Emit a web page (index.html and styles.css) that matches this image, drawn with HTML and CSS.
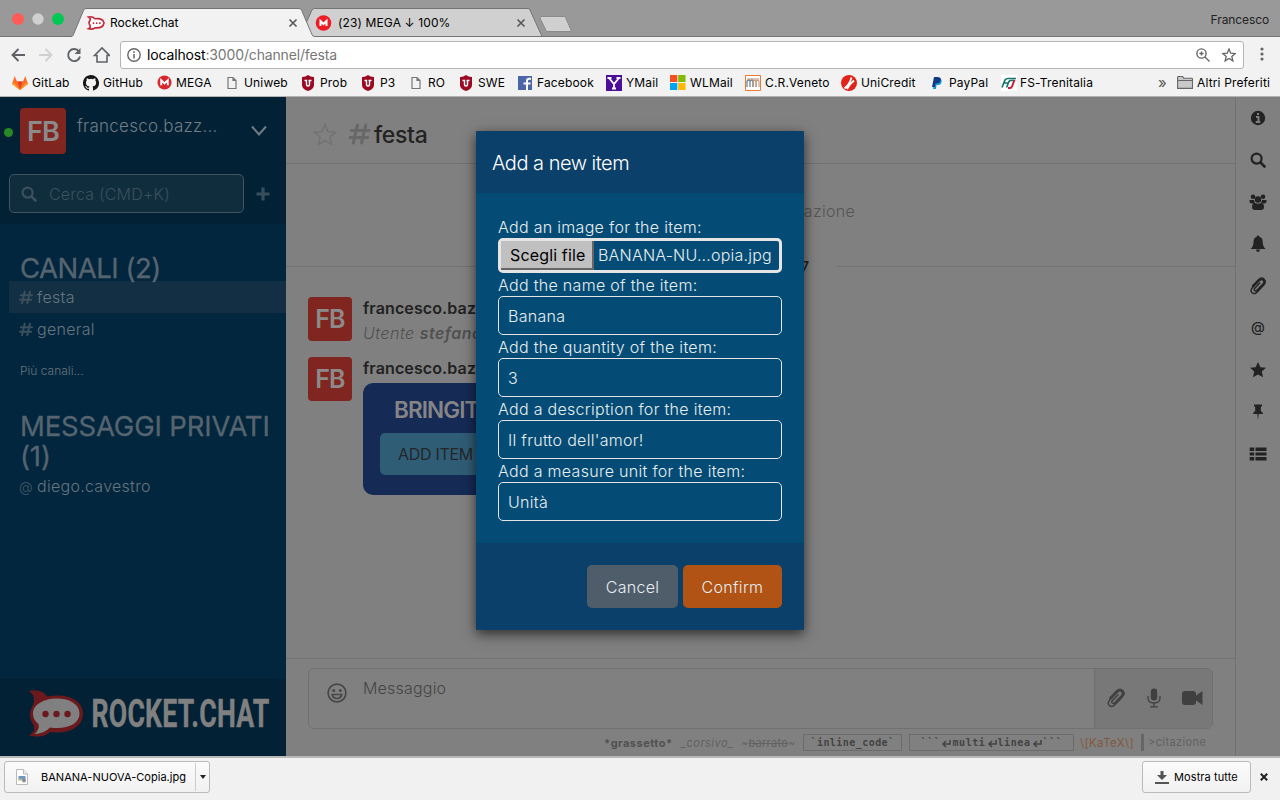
FILE: index.html
```html
<!DOCTYPE html>
<html lang="it">
<head>
<meta charset="utf-8">
<title>Rocket.Chat</title>
<link rel="stylesheet" href="styles.css">
</head>
<body>
<svg class="defs" width="0" height="0">
  <defs>
    <symbol id="clip" viewBox="0 0 18 18"><path d="M14.600 8.200 8.200 14.900c-1.700 1.800-3.600 2.200-5.100.9-1.500-1.400-1.300-3.300.3-5L10.200 3.700c1.300-1.300 2.800-1.500 3.900-.5s1 2.500-.2 3.800l-6 6.200c-.8.8-1.700.9-2.300.3s-.6-1.500.2-2.300l5-5.100M14.600 8.200c1.900-2 2.100-4.300.5-5.900s-3.900-1.300-5.700.5L3.400 9" fill="none" stroke="currentColor" stroke-width="1.400" stroke-linecap="round"/></symbol>
    <symbol id="page" viewBox="0 0 10 14"><path d="M1 1.500h5l3 3v8H1zM6 1.500v3h3" fill="none" stroke="#777" stroke-width="1.200"/></symbol>
    <symbol id="shield" viewBox="0 0 14 16"><path d="M1 2q3 .3 6-2 3 2.300 6 2v8q0 4-6 6-6-2-6-6z" fill="#9b0a22"/><path d="M3.500 5.500h2v4q0 1.500 1.500 1.500t1.500-1.500v-4h2M7.500 5.500h3" fill="none" stroke="#fff" stroke-width="1.400"/></symbol>
    <symbol id="mega" viewBox="0 0 16 16"><circle cx="8" cy="8" r="7.500" fill="#d9272e"/><path d="M4.500 11V5.500L8 9l3.500-3.500V11" fill="none" stroke="#fff" stroke-width="2"/></symbol>
    <symbol id="hash" viewBox="0 0 16 16"><path d="M6.500 1.500 3.500 14.500M12.500 1.500 9.500 14.500M2 5.500h13M1 10.500h13" fill="none" stroke="currentColor" stroke-width="2.200" stroke-linecap="round"/></symbol>
    <symbol id="lens" viewBox="0 0 16 16"><circle cx="6.600" cy="6.600" r="5" fill="none" stroke="currentColor" stroke-width="2.200"/><path d="m10.500 10.500 4 4" stroke="currentColor" stroke-width="2.600" stroke-linecap="round"/></symbol>
  </defs>
</svg>

<header class="titlebar">
  <svg class="tabs" width="580" height="37" viewBox="0 0 580 37">
    <circle cx="18" cy="19" r="6" fill="#ff5c57"/><circle cx="38" cy="19" r="5.700" fill="#d0d0d0"/><circle cx="58" cy="19" r="6" fill="#00c853"/>
    <path d="M300 36.500 312 10q.8-1.500 2.500-1.500H528q1.500 0 2 1.500l12 26.500z" fill="#d0d0d0" stroke="#747474"/>
    <path d="M0 36.500H71q1.500 0 2-1l10.500-25q.8-2 2.500-2H299q2 0 2.700 2L312 34.500q.8 2 2.500 2H580V37H0z" fill="#f2f2f2"/>
    <path d="M0 36.500H71q1.500 0 2-1l10.500-25q.8-2 2.500-2H299q2 0 2.700 2L312 34.500q.8 2 2.500 2H580" fill="none" stroke="#747474"/>
    <path d="M1 36.500H72M314 36.500" stroke="#747474"/>
    <path d="M541 16.500h23q1 0 1.500 1l5.500 12.500q.5 1.500-1 1.500h-22q-1.500 0-2-1l-6-12.500q-.5-1.500 1-1.500z" fill="#d0d0d0" stroke="#8a8a8a"/>
    <path d="m289.500 19.500 7 7m0-7-7 7M517.500 19.500l7 7m0-7-7 7" stroke="#5a5a5a" stroke-width="1.700"/>
    <path d="M88.500 17q4-1 6.500 1.800 8-1 9 4.200-1 5.500-9 4.800-2.500 2-6.500 1 2.500-1.300 1.500-3.500-2-2.500 0-5 1-1.800-1.500-3.300z" fill="#fff" stroke="#c6283a" stroke-width="1.600"/>
    <g fill="#c6283a"><circle cx="93.500" cy="23.200" r=".9"/><circle cx="96.700" cy="23.200" r=".9"/><circle cx="99.900" cy="23.200" r=".9"/></g>
    <circle cx="323.500" cy="23" r="7.800" fill="#ed1c24"/><path d="M320.500 26v-5l3 3 3-3v5" fill="none" stroke="#fff" stroke-width="2"/>
  </svg>
  <span class="tab-title first">Rocket.Chat</span>
  <span class="tab-title second">(23) MEGA ↓ 100%</span>
  <span class="profile">Francesco</span>
</header>

<nav class="toolbar">
  <svg width="110" height="33" viewBox="0 37 110 33" fill="none" stroke="#5f6368" stroke-width="1.900">
    <path d="M25 55H12.500m6-6-6 6 6 6"/><path d="M39 55h12.500m-6-6 6 6-6 6" stroke="#d0d0d0"/>
    <path d="M79 51.500a6 6 0 1 0 1 5"/><path d="M80.500 48v6h-6z" fill="#5f6368" stroke="none"/>
    <path d="M94.500 55.500 102 48l7.500 7.500H107v6.500H97v-6.500z" stroke-width="1.600"/>
  </svg>
  <div class="address">
    <svg width="14" height="14" viewBox="0 0 14 14"><circle cx="7" cy="7" r="6.200" fill="none" stroke="#666" stroke-width="1.400"/><path d="M7 6v4.500M7 3.300V5" stroke="#666" stroke-width="1.500"/></svg>
    <span class="url"><b>localhost</b>:3000/channel/festa</span>
    <svg class="zoomicon" width="14" height="14" viewBox="0 0 14 14" fill="none" stroke="#666" stroke-width="1.400"><circle cx="5.500" cy="5.500" r="4.600"/><path d="m9 9 4.500 4.500M3.500 5.500h4M5.500 3.500v4"/></svg>
    <svg width="14" height="14" viewBox="0 0 14 14"><path d="m7 1 1.700 4.200 4.500.3-3.400 2.900 1.100 4.500L7 10.400l-3.900 2.500 1.100-4.500L.8 5.500l4.500-.3z" fill="none" stroke="#666" stroke-width="1.300"/></svg>
  </div>
  <svg class="dots" width="4" height="14" viewBox="0 0 4 14" fill="#666"><circle cx="2" cy="2" r="1.600"/><circle cx="2" cy="7" r="1.600"/><circle cx="2" cy="12" r="1.600"/></svg>
</nav>

<nav class="bookmarks">
  <a><svg width="16" height="14" viewBox="0 0 16 14"><path d="M0 8 2.700 0 5 5.500h6L13.300 0 16 8l-8 6z" fill="#fc6d26"/><path d="m5 5.500 3 8.500 3-8.500z" fill="#e24329"/><path d="M0 8 5 5.500 8 14zM16 8l-5-2.500L8 14z" fill="#fca326"/><path d="m1 5.500 4 0L8 14zM15 5.500h-4L8 14z" fill="#fc6d26"/></svg><span>GitLab</span></a>
  <a><svg width="16" height="16" viewBox="0 0 16 16"><path fill="#161616" d="M8 0C3.580 0 0 3.580 0 8c0 3.540 2.290 6.530 5.470 7.590.4.070.55-.17.55-.38v-1.490c-2.010.37-2.530-.49-2.690-.94-.09-.23-.48-.94-.82-1.130-.28-.15-.68-.52-.01-.53.63-.01 1.080.58 1.230.82.72 1.210 1.870.87 2.330.66.07-.52.28-.87.51-1.070-1.780-.2-3.640-.89-3.640-3.950 0-.87.31-1.590.82-2.150-.08-.2-.36-1.020.08-2.120 0 0 .67-.21 2.200.82a7.400 7.400 0 0 1 4 0c1.530-1.040 2.200-.82 2.200-.82.44 1.100.16 1.920.08 2.120.51.560.82 1.270.82 2.150 0 3.070-1.870 3.750-3.650 3.950.29.250.54.730.54 1.480v2.200c0 .21.15.46.55.38A8 8 0 0 0 8 0z"/></svg><span>GitHub</span></a>
  <a><svg width="15" height="15"><use href="#mega"/></svg><span>MEGA</span></a>
  <a class="wide"><svg width="10" height="14"><use href="#page"/></svg><span>Uniweb</span></a>
  <a class="uni"><svg width="14" height="16"><use href="#shield"/></svg><span>Prob</span></a>
  <a class="uni"><svg width="14" height="16"><use href="#shield"/></svg><span>P3</span></a>
  <a class="wide"><svg width="10" height="14"><use href="#page"/></svg><span>RO</span></a>
  <a class="uni"><svg width="14" height="16"><use href="#shield"/></svg><span>SWE</span></a>
  <a class="uni"><svg width="15" height="14" viewBox="0 0 15 14"><path fill="#4a66a8" d="M1 0h14v14H1z"/><path d="M10 14V5q0-2.300 2-2.300h2M6.500 7.500h7" fill="none" stroke="#fff" stroke-width="2"/></svg><span>Facebook</span></a>
  <a><svg width="16" height="16" viewBox="0 0 16 16"><path fill="#4b0f9b" d="M0 0h16v16H0z"/><path d="m3 3 5 6 5-6M8 8v6M1.500 3h4M10.500 3h4M6 13.500h4" fill="none" stroke="#fff" stroke-width="1.800"/></svg><span>YMail</span></a>
  <a><svg width="16" height="15" viewBox="0 0 16 15"><path fill="#f4511e" d="M0 0h7.300v7H0z"/><path fill="#7fba00" d="M8.200 0H15.500v7H8.200z"/><path fill="#00a4ef" d="M0 8h7.300v7H0z"/><path fill="#ffb900" d="M8.200 8H15.500v7H8.200z"/></svg><span>WLMail</span></a>
  <a><svg width="16" height="16" viewBox="0 0 16 16"><path fill="#fff" stroke="#ec7a32" d="M.5.500h15v15H.5z"/><path d="M2 12V6q3-2 3 0v6V6q3-2 3 0v6" fill="none" stroke="#6e8493" stroke-width="1.300"/><path d="M8 12V6q3-2 3 0v6V6q3-2 3 0v6M2 4h12" fill="none" stroke="#b98a6c"/></svg><span>C.R.Veneto</span></a>
  <a><svg width="16" height="16" viewBox="0 0 16 16"><circle cx="8" cy="8" r="8" fill="#e2231a"/><path d="M3.500 13.500Q9 9 10.500 2.500M6 14q2.500-5 7-8.500" fill="none" stroke="#fff" stroke-width="1.800"/></svg><span>UniCredit</span></a>
  <a><svg class="pp" width="10" height="12" viewBox="0 0 10 12"><path d="M3 2h6q2 4-2 6H4.500L4 12H1z" fill="#1599d6"/><path d="M2 0h4q4 .5 2.500 4Q7.500 7 3.500 6.500L3 10H0z" fill="#123984"/></svg><span>PayPal</span></a>
  <a class="fs"><svg width="16" height="16" viewBox="0 0 16 16"><path fill="#fff" d="M0 0h16v16H0z"/><path d="M1 12.500 4 5q1-1.500 3-1.500h8M2.500 8h4.500M5.500 12.500 8 6.500q.5-1 2-1h4" fill="none" stroke="#17776d" stroke-width="1.700"/><path d="M7 13h2q1.500 0 2-1.500L13.500 5" fill="none" stroke="#d7193f" stroke-width="2"/></svg><span>FS-Trenitalia</span></a>
  <a class="more">»</a>
  <a><svg width="16" height="13" viewBox="0 0 16 13"><path d="M.6 12.400V1.500q0-1 1-1h4l1.200 1.700H14.500q1 0 1 1v9.200zM.6 4.500h15" fill="#c9c9c9" stroke="#666" stroke-width="1.100"/></svg><span>Altri Preferiti</span></a>
</nav>

<main class="app">
  <aside class="sidebar">
    <div class="account">
      <div class="user">
        <i class="online"></i>
        <span class="avatar large">FB</span>
        <span class="username">francesco.bazz...</span>
        <svg width="16" height="11" viewBox="0 0 16 11"><path d="m1 1.500 7 8 7-8" fill="none" stroke="#6f7c86" stroke-width="2"/></svg>
      </div>
      <div class="finder">
        <div class="searchbox"><svg width="16" height="16"><use href="#lens"/></svg><span>Cerca (CMD+K)</span></div>
        <svg width="14" height="14" viewBox="0 0 14 14"><path d="M7 .5v13M.5 7h13" stroke="#384e5e" stroke-width="3.200"/></svg>
      </div>
    </div>
    <div class="rooms">
      <h3>CANALI (2)</h3>
      <div class="room active"><svg width="14" height="15"><use href="#hash"/></svg><span>festa</span></div>
      <div class="room"><svg width="14" height="15"><use href="#hash"/></svg><span>general</span></div>
      <p class="more-rooms">Più canali...</p>
      <h3 class="private">MESSAGGI PRIVATI (1)</h3>
      <div class="room direct"><i>@</i><span>diego.cavestro</span></div>
    </div>
    <div class="brand">
      <svg width="286" height="77" viewBox="0 679 286 77">
        <path d="M28.500 691q12-3 19 5.500c20-4 35.500 4 35.500 17 0 14-15 21-33 18.500Q43 739 29 735.500c5-3 7-7 3.500-12q-5-8-.5-16.500C36 700 34 694 28.500 691z" fill="#6b191c"/>
        <path d="M57 698.500c13 0 22.500 6 22.500 15s-9 14.500-22.500 14.500q-4 0-7-.5-6 6.500-15.500 6.500 5.500-5 4-10-5.500-4-5.500-10.500c0-9 11-15 24-15z" fill="#808080"/>
        <g fill="#6b191c"><circle cx="45.500" cy="714" r="3.200"/><circle cx="56.500" cy="714" r="3.200"/><circle cx="67.500" cy="714" r="3.200"/></g>
        <text x="91.500" y="727" font-family="Roboto" font-weight="700" font-size="39" textLength="178" lengthAdjust="spacingAndGlyphs" fill="#808080" stroke="#808080" stroke-width=".4">ROCKET.CHAT</text>
      </svg>
    </div>
  </aside>

  <section class="channel">
    <div class="channel-head">
      <svg class="fav" width="24" height="23" viewBox="0 0 24 23"><path d="m12 1.500 3 7.200 7.500.6-5.700 5 1.800 7.200-6.600-3.900-6.600 3.900 1.800-7.200-5.700-5 7.500-.6z" fill="none" stroke="#717171" stroke-width="1.400"/></svg>
      <svg class="hash" width="23" height="22" viewBox="0 0 16 16"><use href="#hash" width="16" height="16"/></svg><h2>festa</h2>
    </div>
    <div class="history">
      <p class="start">Inizio della conversazione</p>
      <div class="day"><span>4 settembre 2017</span></div>
      <article class="message"><span class="avatar">FB</span><div><b>francesco.bazzerla</b><p>Utente <strong>stefano.lia</strong> aggiunto</p></div></article>
      <article class="message second"><span class="avatar">FB</span><div><b>francesco.bazzerla</b><div class="card"><h4>BRINGIT</h4><span class="add-item">ADD ITEM</span></div></div></article>
    </div>
    <div class="composer">
      <div class="compose-box">
        <svg class="smile" width="20" height="20" viewBox="0 0 20 20"><g fill="none" stroke="#474747" stroke-width="1.700"><circle cx="10" cy="10" r="8.900"/><path d="M5.200 11.500q1 4 4.800 4t4.800-4z"/></g><circle cx="6.700" cy="7.500" r="1.500" fill="#474747"/><circle cx="13.300" cy="7.500" r="1.500" fill="#474747"/></svg>
        <span>Messaggio</span>
        <div class="compose-tools">
          <svg width="20" height="20"><use href="#clip"/></svg>
          <svg width="14" height="20" viewBox="0 0 14 20"><rect x="3.800" y=".5" width="6.400" height="12" rx="3.200" fill="#404040"/><path d="M1 8v2q0 5 6 5t6-5V8M7 15v3.500M3 18.800h8" fill="none" stroke="#404040" stroke-width="1.300"/></svg>
          <svg width="21" height="16" viewBox="0 0 21 16"><path d="M3 1h8q3 0 3 3v1.500L20.500 1v14L14 10.500V12q0 3-3 3H3q-3 0-3-3V4q0-3 3-3z" fill="#404040"/></svg>
        </div>
      </div>
      <div class="formatting">
        <b>*grassetto*</b><i>_corsivo_</i><span class="strike">~<s>barrato</s>~</span><code class="inline">`inline_code`</code>
        <code class="multi">```<svg viewBox="0 0 10 8"><path d="M9 0v4H2m3-3L2 4l3 3"/></svg>multi<svg viewBox="0 0 10 8"><path d="M9 0v4H2m3-3L2 4l3 3"/></svg>linea<svg viewBox="0 0 10 8"><path d="M9 0v4H2m3-3L2 4l3 3"/></svg>```</code>
        <span class="katex">\[KaTeX\]</span><span class="quote">&gt;citazione</span>
      </div>
    </div>
  </section>

  <aside class="rail">
    <svg viewBox="0 0 18 18"><circle cx="9" cy="9" r="7.200" fill="#222"/><path d="M7 8h2.500v5M6.800 13h4.500M8 5h2" fill="none" stroke="#808080" stroke-width="1.900"/></svg>
    <svg viewBox="-1 -1 18 18"><use href="#lens" width="16" height="16"/></svg>
    <svg viewBox="0 0 18 18" fill="#222"><circle cx="4" cy="3.700" r="2.300"/><circle cx="14" cy="3.700" r="2.300"/><circle cx="9" cy="6.500" r="3.200"/><path d="M.5 7h4.500l1 3.500H3Q0 10.500.500 7zM17.500 7H13l-1 3.500h3q3 0 2.500-3.500zM3 14q0-4 3-4 3 1.500 6 0 3 0 3 4 0 3-3 3H6q-3 0-3-3z"/></svg>
    <svg viewBox="0 0 18 18"><path d="M9 .5q1.300 0 1.400 1.300 3.300 1 3.300 5.200 0 4.500 3 7H1.500q3-2.500 3-7 0-4.200 3.200-5.200Q7.700.5 9 .5zM7 14.500h4q-.4 2.500-2 2.500T7 14.500z" fill="#222"/></svg>
    <svg viewBox="0 0 18 18"><use href="#clip"/></svg>
    <span>@</span>
    <svg viewBox="0 0 18 18"><path d="m9 1 2.400 5.200 5.600.6-4.200 3.800 1.200 5.600L9 13.400l-5 2.800 1.200-5.600L1 6.800l5.600-.6z" fill="#222"/></svg>
    <svg viewBox="0 0 18 18"><path d="M5 1.500h8v2h-1.200V8q2 1 2.200 3h-4.300L9 17l-.7-6H4q.2-2 2.200-3V3.500H5z" fill="#222"/></svg>
    <svg viewBox="0 0 18 18"><path d="M.7 2.500h4.500v3.500H.7zM6.500 2.500h11v3.500h-11zM.7 7.500h4.500v3H.7zM6.500 7.500h11v3h-11zM.7 12h4.500v3.500H.7zM6.500 12h11v3.500h-11z" fill="#222"/></svg>
  </aside>

  <form class="dialog">
    <h2>Add a new item</h2>
    <div class="fields">
      <label>Add an image for the item:</label>
      <div class="file"><span class="choose">Scegli file</span><span class="filename">BANANA-NU...opia.jpg</span></div>
      <label>Add the name of the item:</label>
      <div class="field">Banana</div>
      <label>Add the quantity of the item:</label>
      <div class="field">3</div>
      <label>Add a description for the item:</label>
      <div class="field">Il frutto dell'amor!</div>
      <label>Add a measure unit for the item:</label>
      <div class="field">Unità</div>
    </div>
    <div class="actions"><span class="cancel">Cancel</span><span class="confirm">Confirm</span></div>
  </form>
</main>

<footer class="downloads">
  <div class="download">
    <svg width="12" height="16" viewBox="0 0 12 16"><path d="M.5.500h7L11.500 5v10.500H.5z" fill="#fff" stroke="#bbb"/><path d="M7.500.5V5h4" fill="#eee" stroke="#bbb"/><path d="M2.500 7h7v4h-7z" fill="#7295c4"/><path d="M2.500 9.500h4v2h-4z" fill="#a5bd91"/><circle cx="8" cy="11.500" r="1.900" fill="#8c8c94"/></svg>
    <span>BANANA-NUOVA-Copia.jpg</span><i></i>
  </div>
  <div class="showall"><svg width="14" height="13" viewBox="0 0 14 13"><path d="M5.500 0h3v4H12L7 9 2 4h3.500zM0 11h14v2H0z" fill="#555"/></svg><span>Mostra tutte</span></div>
  <svg width="8" height="8" viewBox="0 0 8 8"><path d="m.8.8 6.400 6.400m0-6.400L.8 7.200" stroke="#222" stroke-width="2"/></svg>
</footer>
</body>
</html>
```
FILE: styles.css
```css
* { box-sizing: border-box; }
body { margin: 0; width: 1280px; height: 800px; overflow: hidden; font-family: Inter, sans-serif; background: #f2f2f2; display: flex; flex-direction: column; }
svg { display: block; flex: none; }
h2, h3, h4, p { margin: 0; font-weight: 400; }
.defs { position: absolute; }

.titlebar { height: 37px; flex: none; position: relative; background: #999; border-bottom: 1px solid #747474; font-size: 12px; }
.tabs { position: absolute; left: 0; top: 0; }
.tab-title { position: absolute; top: 15px; line-height: 16px; color: #000; white-space: pre; }
.tab-title.first { left: 110px; letter-spacing: .02px; }
.tab-title.second { left: 338px; letter-spacing: .13px; }
.profile { position: absolute; right: 11px; top: 12px; line-height: 16px; color: #222; letter-spacing: -.1px; }

.toolbar { height: 33px; flex: none; display: flex; align-items: center; background: #f2f2f2; }
.address { width: 1124px; height: 28px; margin: 3px 0 0 10px; border: 1px solid #b5b5b5; border-radius: 3px; background: #fff; display: flex; align-items: center; padding: 0 7px 0 6px; }
.url { flex: 1; margin: -2px 0 0 6px; font-size: 14px; color: #777; letter-spacing: -.15px; }
.url b { font-weight: 400; color: #000; }
.zoomicon { margin-right: 12px; }
.dots { margin-left: 16px; }

.bookmarks { height: 27px; flex: none; display: grid; grid-template-columns: 71px 74px 70px 74px 60px 50px 48px 58px 89px 64px 75px 96px 91px 69px 157px 19px 103px; align-items: center; padding: 0 0 1px 12px; font-size: 12px; line-height: 16px; border-bottom: 1px solid #b4b4b4; color: #000; }
.bookmarks a { display: flex; align-items: center; gap: 4px; white-space: nowrap; letter-spacing: .15px; }
.bookmarks .wide { gap: 7px; }
.bookmarks .uni { gap: 5px; }
.bookmarks .fs { gap: 3px; }
.bookmarks .pp { margin-right: 3px; }
.bookmarks .more { font-size: 15px; color: #555; }

.app { height: 659px; flex: none; position: relative; display: flex; background: #808080; letter-spacing: .3px; }
.sidebar { width: 286px; display: flex; flex-direction: column; background: #02263d; color: #56646f; }
.account { height: 127px; background: #022135; }
.user { display: flex; height: 77px; padding: 11px 19px 0 4px; }
.online { width: 9px; height: 9px; border-radius: 50%; background: #278a27; margin: 20px 7px 0 0; }
.avatar { flex: none; width: 44px; height: 44px; border-radius: 4px; background: #80251f; color: #8b8b8b; display: flex; align-items: center; justify-content: center; font: 600 25px/1 Inter, sans-serif; letter-spacing: -.8px; }
.avatar.large { width: 46px; height: 46px; font-size: 27px; }
.username { margin: 7px 0 0 11px; font-size: 17px; line-height: 22px; font-weight: 300; color: #717d87; width: 174px; letter-spacing: .25px; }
.user svg { margin-top: 17px; }
.finder { display: flex; align-items: center; padding-left: 9px; gap: 12px; }
.searchbox { width: 235px; height: 39px; border: 1px solid #415461; border-radius: 5px; background: #102d3e; display: flex; align-items: center; padding-left: 11px; gap: 12px; color: #3b4f5d; font-size: 16px; font-weight: 300; letter-spacing: .2px; }
.rooms { flex: 1; padding: 28px 0 0 9px; }
.rooms h3 { height: 29px; padding-left: 11px; font-size: 27.5px; line-height: 32px; letter-spacing: -.5px; white-space: nowrap; -webkit-text-stroke: .3px #56646f; }
.rooms h3.private { height: 59px; width: 274px; line-height: 30px; white-space: normal; letter-spacing: -.17px; }
.room { height: 32px; display: flex; align-items: center; padding-left: 10px; gap: 4px; font-size: 16px; font-weight: 300; color: #66747e; letter-spacing: .28px; }
.room svg { color: #3c4f5d; }
.room.active { background: #122f43; }
.room i { width: 14px; font-style: normal; font-size: 14px; color: #4a5c69; }
.more-rooms { padding: 18px 0 0 11px; font-size: 12px; line-height: 16px; height: 66px; font-weight: 300; color: #66747e; letter-spacing: 0; }
.brand { height: 77px; background: #022135; }

.channel { flex: 1; min-width: 0; display: flex; flex-direction: column; }
.channel-head { height: 67px; display: flex; align-items: center; padding: 8px 0 0 27px; border-bottom: 1px solid #717171; color: #222; }
.channel-head h2 { font-size: 23px; font-weight: 500; letter-spacing: -.3px; margin: 2px 0 0 3px; }
.channel-head .hash { margin-left: 11px; color: #686868; }
.history { flex: 1; overflow: hidden; }
.start { text-align: right; padding: 37px 380px 0 0; font-size: 16px; line-height: 20px; height: 59px; font-weight: 300; color: #555; }
.day { display: flex; align-items: center; height: 22px; margin-top: 32px; font-size: 13px; font-weight: 600; color: #222; }
.day::before { content: ""; width: 360px; border-top: 1px solid #717171; }
.day::after { content: ""; flex: 1; border-top: 1px solid #717171; margin-left: 28px; }
.day span { width: 163px; text-align: right; white-space: nowrap; letter-spacing: 0; }
.message { display: flex; padding: 20px 0 0 22px; height: 80px; }
.message.second { padding-top: 0; height: 150px; }
.message > div { margin-left: 11px; }
.message b { display: block; font-size: 16px; line-height: 23px; font-weight: 600; color: #222; letter-spacing: .12px; }
.message p { font-size: 16px; line-height: 26px; font-style: italic; font-weight: 300; color: #505050; letter-spacing: .5px; }
.message strong { font-weight: 600; }
.card { margin-top: 3px; width: 300px; height: 112px; border-radius: 10px; background: #152a55; padding: 13px 17px; }
.card h4 { padding-left: 14px; font-size: 22.5px; line-height: 28px; font-weight: 600; color: #858585; letter-spacing: -.9px; }
.add-item { display: flex; align-items: center; width: 130px; height: 42px; margin-top: 9px; padding-left: 18px; border-radius: 5px; background: #2f5d75; color: #232629; font-size: 16px; letter-spacing: -.3px; }
.history .message.second { margin-top: 0; }
.composer { height: 98px; border-top: 1px solid #717171; padding: 9px 22px 0; }
.compose-box { height: 61px; border: 1px solid #707070; border-radius: 6px; display: flex; color: #454545; font-size: 16px; font-weight: 300; overflow: hidden; padding-left: 18px; letter-spacing: .2px; }
.smile { margin: 14px 16px 0 0; }
.compose-box span { padding-top: 9px; flex: 1; }
.compose-tools { width: 118px; background: #787878; border-left: 1px solid #6d6d6d; display: flex; align-items: center; gap: 21px; padding: 0 0 2px 11px; color: #404040; }
.formatting { display: flex; align-items: center; height: 17px; margin-top: 5px; padding-left: 296px; font-size: 11px; white-space: nowrap; color: #626262; letter-spacing: .25px; }
.formatting b { width: 77px; color: #505050; letter-spacing: .5px; }
.formatting i { width: 60px; letter-spacing: .5px; }
.formatting .strike { width: 62px; }
.formatting code { height: 17px; border: 1px solid #6c6c6c; font: 700 10px/14px "DejaVu Sans Mono", monospace; color: #444; display: flex; align-items: center; justify-content: center; }
.formatting .inline { width: 99px; margin-right: 7px; letter-spacing: .45px; }
.formatting .multi { width: 165px; margin-right: 6px; letter-spacing: .6px; }
.formatting svg { width: 10px; height: 8px; fill: none; stroke: #444; stroke-width: 1.6; margin: 2px 1px 0 1px; }
.formatting .katex { color: #80583f; width: 61px; font-size: 11.5px; letter-spacing: .35px; }
.quote { border-left: 3px solid #666; padding-left: 4px; line-height: 17px; letter-spacing: .4px; }

.rail { width: 45px; border-left: 1px solid #717171; display: flex; flex-direction: column; align-items: center; gap: 24px; padding-top: 12px; color: #222; }
.rail svg { width: 18px; height: 18px; }
.rail span { height: 18px; font-size: 14px; line-height: 16px; font-weight: 500; letter-spacing: 0; }

.dialog { position: absolute; left: 476px; top: 34px; width: 328px; height: 499px; background: #044c75; color: #e8edf1; box-shadow: 0 4px 12px rgba(0,0,0,.65); font-size: 16px; font-weight: 300; }
.dialog h2 { height: 62px; background: #0b406a; padding: 20px 16px; font-size: 20px; line-height: 24px; font-weight: 300; letter-spacing: -.5px; color: #fff; }
.fields { height: 350px; padding: 22px 22px 0; }
.fields label { display: block; height: 23px; line-height: 24px; white-space: nowrap; letter-spacing: .3px; }
.field { height: 39px; border: 1px solid #e5e5e5; border-radius: 5px; padding: 0 9px; line-height: 38px; }
.file { height: 35px; border: 3px solid #e5e5e5; border-radius: 5px; display: flex; align-items: center; white-space: nowrap; }
.choose { width: 93px; height: 29px; background: #c0c0c0; border-right: 2px solid #666; border-bottom: 2px solid #666; color: #000; font-weight: 400; padding-left: 9px; line-height: 28px; letter-spacing: .15px; }
.filename { margin: -2px 0 0 4px; letter-spacing: .2px; }
.actions { height: 87px; background: #0b406a; padding: 22px 22px 0; display: flex; justify-content: flex-end; gap: 5px; }
.actions span { height: 43px; line-height: 44px; text-align: center; border-radius: 5px; }
.cancel { width: 91px; background: #4f5d6b; }
.confirm { width: 99px; background: #b05314; }

.downloads { height: 44px; flex: none; border-top: 2px solid #b8b8b8; background: #f1f1f1; display: flex; align-items: flex-start; padding: 3px 12px 0 4px; font-size: 11px; color: #000; }
.download, .showall { height: 32px; border: 1px solid #bbb; border-radius: 3px; background: linear-gradient(#fbfbfb, #f1f1f1); display: flex; align-items: center; }
.download { width: 206px; padding-left: 11px; }
.download span { margin-left: 13px; width: 155px; letter-spacing: .03px; border-right: 1px solid #ccc; line-height: 28px; white-space: nowrap; }
.download i { border: 3px solid transparent; border-top: 4px solid #222; border-bottom: 0; margin-left: 4px; }
.showall { width: 109px; margin-left: auto; padding-left: 12px; gap: 5px; letter-spacing: .1px; }
.showall + svg { margin: 12px 0 0 9px; }
```
